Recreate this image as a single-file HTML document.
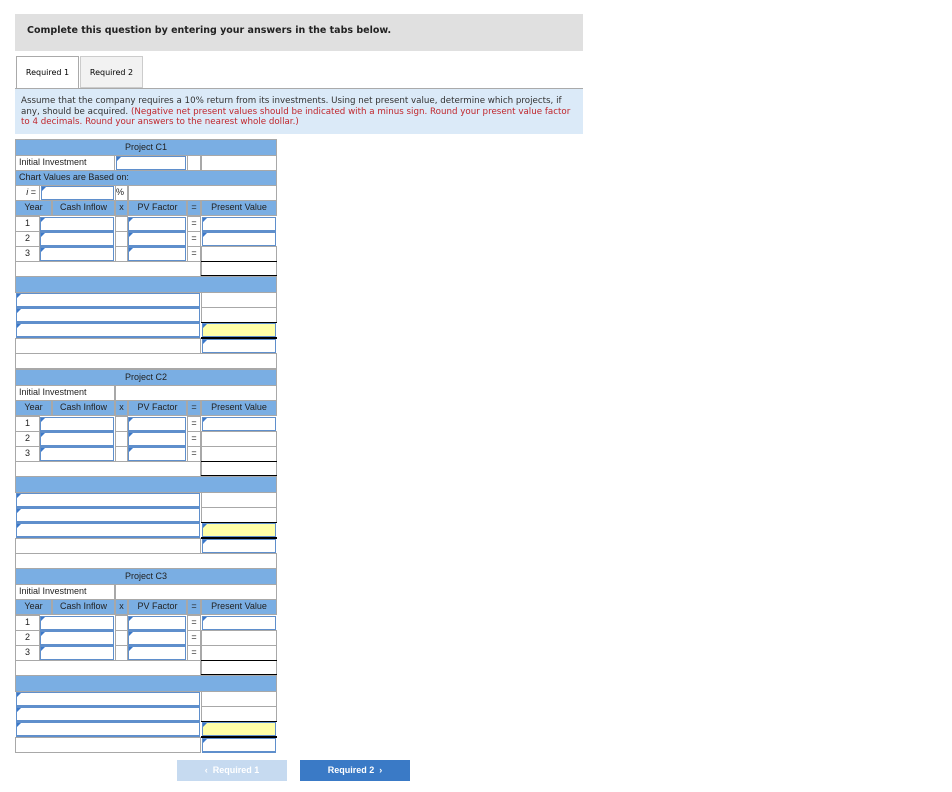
<!DOCTYPE html><html><head><style>
body{margin:0;background:#fff;font-family:"DejaVu Sans","Liberation Sans",sans-serif;}
.a{position:absolute;box-sizing:border-box}
.c{position:absolute;box-sizing:border-box;border:1px solid #a8a8a8;font-family:"Liberation Sans",sans-serif;font-size:9px;color:#222;line-height:13px}
.b{background:#7aaee3}
.in{position:absolute;box-sizing:border-box;border:1px solid #5f8fcc;border-width:1px 1px 2px 1px;background:#fff}
.in:before{content:"";position:absolute;left:0;top:0;border-left:4px solid #3b78c9;border-bottom:4px solid transparent}
.y{background:#ffffa8}
</style></head><body>
<div class="a" style="left:15px;top:14px;width:568px;height:37px;background:#e0e0e0;font-size:9.5px;font-weight:bold;padding:11px 12px;color:#222">Complete this question by entering your answers in the tabs below.</div>
<div class="a" style="left:16px;top:56px;width:63px;height:33px;border:1px solid #aaa;border-bottom:none;background:#fff;font-size:8px;text-align:center;line-height:32px">Required 1</div>
<div class="a" style="left:80px;top:56px;width:63px;height:32px;border:1px solid #ccc;background:#f2f2f2;font-size:8px;text-align:center;line-height:32px">Required 2</div>
<div class="a" style="left:15px;top:88px;width:568px;height:1px;background:#aaa"></div>
<div class="a" style="left:15px;top:89px;width:568px;height:45px;background:#dbeaf8;font-size:8.7px;line-height:10.5px;padding:7px 6px 0 6px;color:#333">Assume that the company requires a 10% return from its investments. Using net present value, determine which projects, if any, should be acquired. <span style="color:#c0272d">(Negative net present values should be indicated with a minus sign. Round your present value factor to 4 decimals. Round your answers to the nearest whole dollar.)</span></div>
<div id="t"></div>
<div class="a" style="left:177px;top:760px;width:110px;height:21px;background:#c6daf0;color:#fff;font:bold 9px 'Liberation Sans',sans-serif;text-align:center;line-height:21px">&#8249;&nbsp; Required 1</div>
<div class="a" style="left:300px;top:760px;width:110px;height:21px;background:#3a7ac6;color:#fff;font:bold 9px 'Liberation Sans',sans-serif;text-align:center;line-height:21px">Required 2 &nbsp;&#8250;</div>
<script>
var h='';
function c(x,y,w,hh,cls,txt,st){h+='<div class="c '+(cls||'')+'" style="left:'+x+'px;top:'+y+'px;width:'+w+'px;height:'+hh+'px;'+(st||'')+'">'+(txt||'')+'</div>';}
function inp(x,y,w,hh,cls){h+='<div class="in '+(cls||'')+'" style="left:'+(x+1)+'px;top:'+(y+1)+'px;width:'+(w-2)+'px;height:'+(hh-1)+'px"></div>';}
function line(x,y,w,t){h+='<div class="a" style="left:'+x+'px;top:'+y+'px;width:'+w+'px;height:'+t+'px;background:#000"></div>';}
function sec(y,title,chart,pvin,last){
 c(15,y,262,17,'b',title,'text-align:center;line-height:15px');y+=16;
 c(15,y,100,16,'','Initial Investment','padding-left:3px');
 if(chart){inp(115,y,72,16);c(187,y,14,16);c(201,y,76,16);
  y+=15;c(15,y,262,16,'b','Chart Values are Based on:','padding-left:3px');y+=15;
  c(15,y,25,16,'','<i>i</i> =','text-align:right;padding-right:3px');inp(40,y,75,16);c(115,y,13,16,'','%');c(128,y,149,16);}
 else c(115,y,162,16);
 y+=15;
 c(15,y,37,16,'b','Year','text-align:center');c(52,y,63,16,'b','Cash Inflow','text-align:center');c(115,y,13,16,'b','x','text-align:center');c(128,y,59,16,'b','PV Factor','text-align:center');c(187,y,14,16,'b','=','text-align:center');c(201,y,76,16,'b','Present Value','text-align:center');
 y+=16;
 for(var r=1;r<=3;r++){c(15,y,25,16,'',''+r,'text-align:center');inp(39,y,76,16);c(115,y,13,16);inp(127,y,60,16);c(187,y,14,16,'','=','text-align:center');
  if(r<=pvin)inp(201,y,76,16);else c(201,y,76,16);y+=15;}
 c(15,y,186,16);c(201,y,76,16);line(201,y,76,1);line(201,y+14,76,2);y+=15;
 c(15,y,262,17,'b');y+=16;
 inp(15,y,186,16);c(201,y,76,16);y+=15;
 inp(15,y,186,16);c(201,y,76,16);line(201,y+15,76,1);y+=15;
 inp(15,y,186,16);inp(201,y,76,16,'y');line(201,y+15,76,2);y+=16;
 c(15,y,186,16);inp(201,y,76,16);y+=15;
 if(!last)c(15,y,262,16);
}
sec(139,'Project C1',1,2);sec(369,'Project C2',0,1);sec(568,'Project C3',0,1,1);
document.getElementById('t').innerHTML=h;
</script>
</body></html>
